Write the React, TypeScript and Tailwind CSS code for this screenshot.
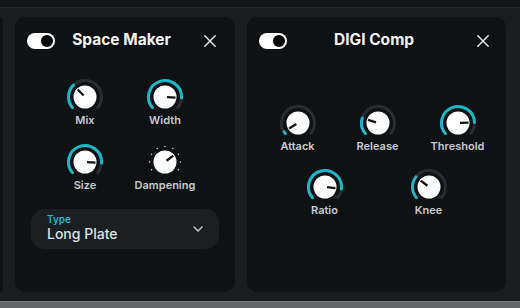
import React from "react";

const CYAN = "#1ab8c7";

function Knob({ value, dots }: { value: number; dots?: boolean }) {
  const c = 19;
  const r = 16.5;
  const start = -130;
  const end = 130;
  const ang = start + (end - start) * value;
  const pt = (deg: number, rad: number) => {
    const t = (deg * Math.PI) / 180;
    return [c + rad * Math.sin(t), c - rad * Math.cos(t)];
  };
  const arc = (from: number, to: number) => {
    const [x1, y1] = pt(from, r);
    const [x2, y2] = pt(to, r);
    const large = to - from > 180 ? 1 : 0;
    return `M ${x1} ${y1} A ${r} ${r} 0 ${large} 1 ${x2} ${y2}`;
  };
  const [px1, py1] = pt(ang, 2);
  const [px2, py2] = pt(ang, 10.5);

  return (
    <svg width="38" height="38" viewBox="0 0 38 38">
      {dots ? (
        Array.from({ length: 9 }).map((_, i) => {
          const [x, y] = pt(-120 + i * 30, 15.5);
          return <circle key={i} cx={x} cy={y} r="0.75" fill="#cfd3d6" />;
        })
      ) : (
        <>
          <path d={arc(start, end)} fill="none" stroke="#2a2e33" strokeWidth="3" strokeLinecap="round" />
          <path d={arc(start, Math.max(ang, start + 1))} fill="none" stroke={CYAN} strokeWidth="3" strokeLinecap="round" />
        </>
      )}
      <circle cx={c} cy={c} r="11.5" fill="#ffffff" />
      <line x1={px1} y1={py1} x2={px2} y2={py2} stroke="#121416" strokeWidth="2.3" />
    </svg>
  );
}

function KnobCell({ label, value, dots }: { label: string; value: number; dots?: boolean }) {
  return (
    <div className="flex w-[80px] flex-col items-center">
      <Knob value={value} dots={dots} />
      <span className="-mt-[3px] text-[11px] font-semibold leading-[14px] text-[#c8cbcf]">{label}</span>
    </div>
  );
}

function Toggle() {
  return (
    <div className="flex h-[16px] w-[28px] items-center justify-end rounded-full bg-white p-[2px]">
      <div className="h-[12px] w-[12px] rounded-full bg-black" />
    </div>
  );
}

function CloseIcon() {
  return (
    <svg width="12" height="12" viewBox="0 0 12 12">
      <path d="M0.8 0.8 L11.2 11.2 M11.2 0.8 L0.8 11.2" stroke="#e8eaec" strokeWidth="1.4" strokeLinecap="round" />
    </svg>
  );
}

function Header({ title, pr }: { title: string; pr: string }) {
  return (
    <div className={`grid h-[16px] grid-cols-[1fr_auto_1fr] items-center pl-[12px] ${pr}`}>
      <Toggle />
      <span className="pb-[2px] text-[15.5px] font-bold leading-[16px] text-[#f2f3f4]">{title}</span>
      <div className="justify-self-end">
        <CloseIcon />
      </div>
    </div>
  );
}

export default function App() {
  return (
    <div className="flex h-[308px] w-[520px] flex-col overflow-hidden bg-[#1a1d20] font-['Inter',sans-serif]">
      <div className="h-[8px] border-b border-[#24282c] bg-[#131619]" />

      <div className="flex flex-1 gap-[12px] py-[9px]">
        <div className="w-[3px] rounded-r-[3px] bg-[#0f1215]" />

        {/* Space Maker */}
        <div className="flex w-[220px] flex-col rounded-[10px] bg-[#0f1215] pt-[15px]">
          <Header title="Space Maker" pr="pr-[19px]" />
          <div className="mt-[30px] grid grid-cols-[80px_80px] justify-center gap-y-[16px]">
            <KnobCell label="Mix" value={0.33} />
            <KnobCell label="Width" value={0.86} />
            <KnobCell label="Size" value={0.86} />
            <KnobCell label="Dampening" value={0.7} dots />
          </div>
          <div className="mx-[16px] mt-[17px] flex h-[40px] items-start justify-between rounded-[14px] bg-[#1b1f22] pl-[16px] pr-[16px] pt-[4px]">
            <div className="flex flex-col">
              <span className="text-[10px] font-semibold leading-[12px] text-[#1fb9c8]">Type</span>
              <span className="text-[14px] font-medium leading-[18px] text-[#dfe2e5]">Long Plate</span>
            </div>
            <svg className="mt-[13px]" width="10" height="6" viewBox="0 0 10 6">
              <path d="M1 1 L5 5 L9 1" fill="none" stroke="#c8ccd0" strokeWidth="1.4" strokeLinecap="round" strokeLinejoin="round" />
            </svg>
          </div>
        </div>

        {/* DIGI Comp */}
        <div className="flex w-[259px] flex-col rounded-[10px] bg-[#0f1215] pt-[15px]">
          <Header title="DIGI Comp" pr="pr-[17px]" />
          <div className="mt-[56px] flex justify-center pl-[2px]">
            <KnobCell label="Attack" value={0.03} />
            <KnobCell label="Release" value={0.22} />
            <KnobCell label="Threshold" value={0.84} />
          </div>
          <div className="mt-[15px] flex justify-center gap-[24px]">
            <KnobCell label="Ratio" value={0.87} />
            <KnobCell label="Knee" value={0.3} />
          </div>
        </div>
      </div>

      <div className="h-[7px] border-t border-[#7a7c7e] bg-[#646566]" />
    </div>
  );
}
